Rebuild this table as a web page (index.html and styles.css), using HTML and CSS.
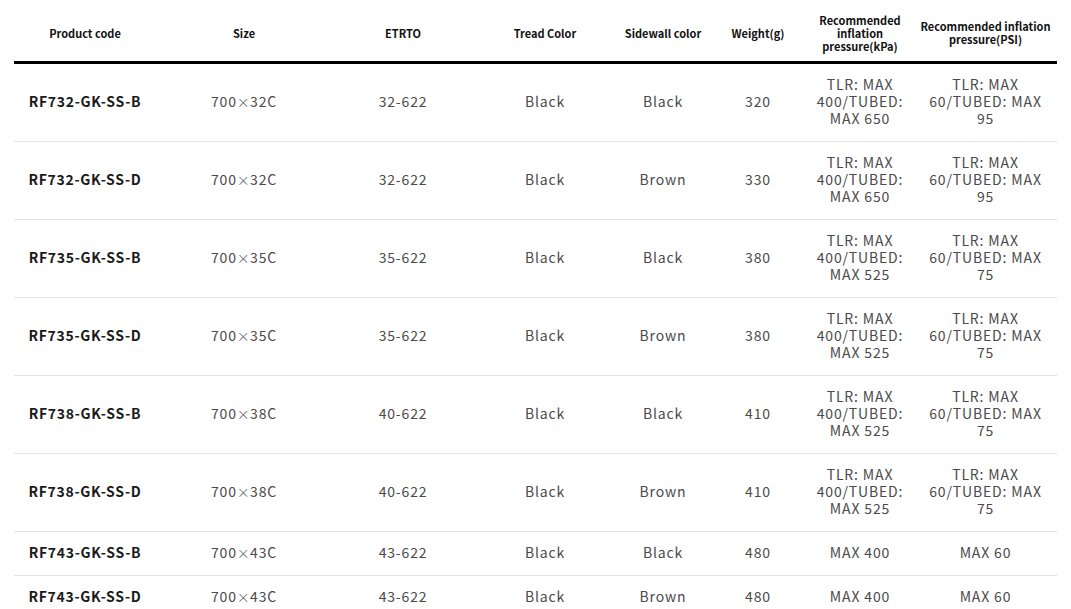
FILE: index.html
```html
<!DOCTYPE html>
<html lang="en">
<head>
<meta charset="utf-8">
<title>Tire specifications</title>
<link rel="stylesheet" href="styles.css">
</head>
<body>
<div class="wrap">
<table class="spec">
  <colgroup>
    <col class="c1"><col class="c2"><col class="c3"><col class="c4"><col class="c5"><col class="c6"><col class="c7"><col class="c8">
  </colgroup>
  <thead>
    <tr>
      <th>Product code</th>
      <th>Size</th>
      <th>ETRTO</th>
      <th>Tread Color</th>
      <th>Sidewall color</th>
      <th>Weight(g)</th>
      <th>Recommended inflation pressure(kPa)</th>
      <th>Recommended inflation pressure(PSI)</th>
    </tr>
  </thead>
  <tbody>
    <tr><td class="code">RF732-GK-SS-B</td><td>700<span class="x">×</span>32C</td><td>32-622</td><td>Black</td><td>Black</td><td>320</td><td>TLR: MAX 400/TUBED: MAX 650</td><td>TLR: MAX 60/TUBED: MAX 95</td></tr>
    <tr><td class="code">RF732-GK-SS-D</td><td>700<span class="x">×</span>32C</td><td>32-622</td><td>Black</td><td>Brown</td><td>330</td><td>TLR: MAX 400/TUBED: MAX 650</td><td>TLR: MAX 60/TUBED: MAX 95</td></tr>
    <tr><td class="code">RF735-GK-SS-B</td><td>700<span class="x">×</span>35C</td><td>35-622</td><td>Black</td><td>Black</td><td>380</td><td>TLR: MAX 400/TUBED: MAX 525</td><td>TLR: MAX 60/TUBED: MAX 75</td></tr>
    <tr><td class="code">RF735-GK-SS-D</td><td>700<span class="x">×</span>35C</td><td>35-622</td><td>Black</td><td>Brown</td><td>380</td><td>TLR: MAX 400/TUBED: MAX 525</td><td>TLR: MAX 60/TUBED: MAX 75</td></tr>
    <tr><td class="code">RF738-GK-SS-B</td><td>700<span class="x">×</span>38C</td><td>40-622</td><td>Black</td><td>Black</td><td>410</td><td>TLR: MAX 400/TUBED: MAX 525</td><td>TLR: MAX 60/TUBED: MAX 75</td></tr>
    <tr><td class="code">RF738-GK-SS-D</td><td>700<span class="x">×</span>38C</td><td>40-622</td><td>Black</td><td>Brown</td><td>410</td><td>TLR: MAX 400/TUBED: MAX 525</td><td>TLR: MAX 60/TUBED: MAX 75</td></tr>
    <tr><td class="code">RF743-GK-SS-B</td><td>700<span class="x">×</span>43C</td><td>43-622</td><td>Black</td><td>Black</td><td>480</td><td>MAX 400</td><td>MAX 60</td></tr>
    <tr><td class="code">RF743-GK-SS-D</td><td>700<span class="x">×</span>43C</td><td>43-622</td><td>Black</td><td>Brown</td><td>480</td><td>MAX 400</td><td>MAX 60</td></tr>
  </tbody>
</table>
</div>
</body>
</html>
```
FILE: styles.css
```css
html, body {
  margin: 0;
  padding: 0;
  background: #fff;
}
body {
  font-family: "Noto Sans CJK JP", "Noto Sans", sans-serif;
  color: #444;
}
.wrap {
  padding: 0 14px;
}
.spec {
  width: 1043px;
  border-collapse: collapse;
  table-layout: fixed;
}
.c1 { width: 142px; }
.c2 { width: 176px; }
.c3 { width: 142px; }
.c4 { width: 142px; }
.c5 { width: 94px; }
.c6 { width: 96px; }
.c7 { width: 108px; }
.c8 { width: 143px; }
.spec th {
  height: 62px;
  padding: 6px 6px 0;
  box-sizing: border-box;
  font-size: 11px;
  line-height: 13px;
  font-weight: 700;
  color: #111;
  text-align: center;
  vertical-align: middle;
  border-bottom: 3px solid #000;
}
.spec td {
  padding: 12px 6px 14px;
  font-size: 14px;
  line-height: 17px;
  letter-spacing: 0.06em;
  text-align: center;
  vertical-align: middle;
  border-bottom: 1px solid #e3e3e3;
  color: #4a4a4a;
}
.spec td .x {
  color: #777;
  font-size: 13px;
  letter-spacing: 0.02em;
}
.spec td.code {
  font-weight: 700;
  color: #1a1a1a;
  letter-spacing: 0.05em;
}
```
